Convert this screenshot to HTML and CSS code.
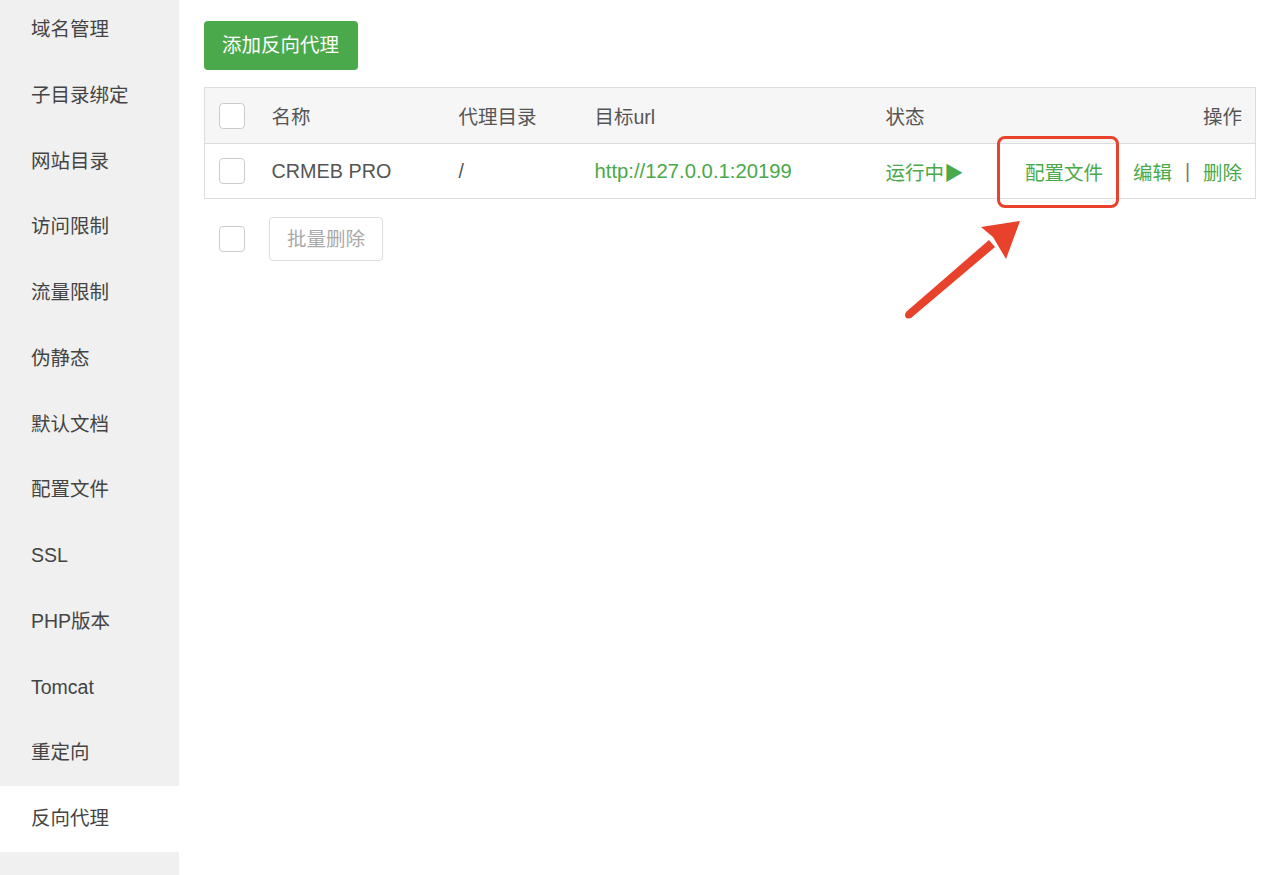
FILE: index.html
```html
<!DOCTYPE html>
<html>
<head>
  <meta charset="UTF-8">
  <title>反向代理</title>
  <link rel="stylesheet" href="styles.css">
</head>
<body>
<div class="page">
  <ul class="side-menu">
    <li>域名管理</li>
    <li>子目录绑定</li>
    <li>网站目录</li>
    <li>访问限制</li>
    <li>流量限制</li>
    <li>伪静态</li>
    <li>默认文档</li>
    <li>配置文件</li>
    <li>SSL</li>
    <li>PHP版本</li>
    <li>Tomcat</li>
    <li>重定向</li>
    <li class="active">反向代理</li>
    <li></li>
  </ul>

  <div class="content">
    <a class="green-btn" href="#">添加反向代理</a>

    <table class="proxy-table">
      <colgroup>
        <col class="c-check">
        <col class="c-name">
        <col class="c-dir">
        <col class="c-url">
        <col class="c-state">
        <col class="c-ops">
      </colgroup>
      <thead>
        <tr>
          <th><span class="check"></span></th>
          <th>名称</th>
          <th>代理目录</th>
          <th>目标url</th>
          <th>状态</th>
          <th class="right">操作</th>
        </tr>
      </thead>
      <tbody>
        <tr>
          <td><span class="check"></span></td>
          <td class="name">CRMEB PRO</td>
          <td>/</td>
          <td class="green url">http://127.0.0.1:20199</td>
          <td class="green">运行中▶</td>
          <td class="right">
            <div class="ops">
              <a class="link conf" href="#">配置文件</a>
              <a class="link" href="#">编辑</a>
              <span class="sep">|</span>
              <a class="link" href="#">删除</a>
            </div>
          </td>
        </tr>
      </tbody>
    </table>

    <div class="batch">
      <span class="check"></span>
      <a class="gray-btn" href="#">批量删除</a>
    </div>
  </div>

  <!-- annotation: red box + arrow -->
  <div class="mark-box"></div>
  <svg class="mark-arrow" width="140" height="110" viewBox="900 215 140 110">
    <polygon points="906,312 989,240 995,247 911,318" fill="#e8412c"/>
    <circle cx="908.5" cy="315" r="3.5" fill="#e8412c"/>
    <polygon points="1020,221 981,227 993,237 1006,259" fill="#e8412c"/>
  </svg>
</div>
</body>
</html>
```

FILE: styles.css
```css
* {
  margin: 0;
  padding: 0;
  box-sizing: border-box;
}

body {
  background: #fff;
  font-family: "Liberation Sans", "Noto Sans CJK SC", sans-serif;
  font-size: 19.5px;
  color: #555;
}

.page {
  position: relative;
  display: flex;
  height: 875px;
  overflow: hidden;
}

.side-menu {
  list-style: none;
  width: 179px;
  flex-shrink: 0;
  background: #f0f0f0;
  margin-top: -3px;
}

.side-menu li {
  height: 65.75px;
  line-height: 65.75px;
  padding-left: 31px;
  color: #444;
}

.side-menu li.active {
  background: #fff;
}

.content {
  flex: 1;
  padding: 21px 24px 0 25px;
}

.green-btn {
  display: inline-block;
  height: 49px;
  line-height: 49px;
  padding: 0 19px 0 18px;
  background: #4aa94a;
  color: #fff;
  border-radius: 4px;
  text-decoration: none;
}

.proxy-table {
  width: 100%;
  margin-top: 17px;
  border-collapse: collapse;
  table-layout: fixed;
  border: 1px solid #ddd;
}

.c-check { width: 67px; }
.c-name { width: 187px; }
.c-dir { width: 136px; }
.c-url { width: 291px; }
.c-state { width: 120px; }

.proxy-table th {
  height: 56px;
  background: #f6f6f6;
  font-weight: normal;
  color: #555;
  text-align: left;
  border-bottom: 1px solid #ddd;
}

.proxy-table td {
  height: 55px;
  text-align: left;
  white-space: nowrap;
}

.proxy-table .name {
  font-size: 19.8px;
}

.proxy-table .url {
  font-size: 20.3px;
}

.proxy-table th:first-child,
.proxy-table td:first-child {
  padding-left: 14px;
}

.proxy-table .right {
  text-align: right;
  padding-right: 13px;
}

.ops {
  display: flex;
  justify-content: flex-end;
  align-items: center;
}

.check {
  display: inline-block;
  width: 26px;
  height: 26px;
  border: 1px solid #ccc;
  border-radius: 4px;
  background: #fff;
  vertical-align: middle;
}

.green {
  color: #4aa94a;
}

.link {
  color: #4aa94a;
  text-decoration: none;
}

.conf {
  margin-right: 30px;
}

.sep {
  color: #777;
  margin: 0 13px 0 13px;
}

.batch {
  display: flex;
  align-items: center;
  margin-top: 18px;
  padding-left: 15px;
}

.gray-btn {
  display: inline-block;
  height: 44px;
  line-height: 42px;
  margin-left: 24px;
  padding: 0 17px;
  border: 1px solid #ddd;
  border-radius: 4px;
  color: #aaa;
  text-decoration: none;
}

.mark-box {
  position: absolute;
  left: 997px;
  top: 136px;
  width: 122px;
  height: 72px;
  border: 3px solid #e8412c;
  border-radius: 8px;
}

.mark-arrow {
  position: absolute;
  left: 900px;
  top: 215px;
}
```
